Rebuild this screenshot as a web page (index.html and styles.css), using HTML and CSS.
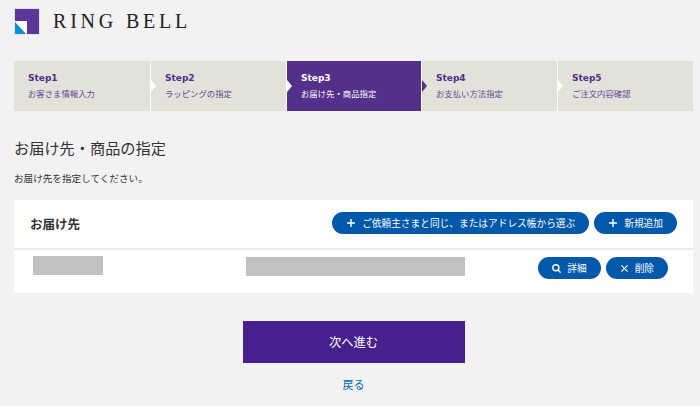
FILE: index.html

```html
<!DOCTYPE html>
<html lang="ja">
<head>
    <meta charset="UTF-8">
    <meta name="viewport" content="width=device-width, initial-scale=1.0">
    <title>お届け先・商品の指定</title>
    <link rel="stylesheet" href="styles.css">
</head>
<body>
    <header class="site-header">
        <svg class="logo-mark" width="26" height="27" viewBox="0 0 26 27">
            <rect x="0.5" y="0.5" width="25" height="26" fill="#5b3797" stroke="#e4dfee"/>
            <rect x="1" y="13" width="12" height="13" fill="#fff"/>
            <polygon points="1,14 12,26 1,26" fill="#0a8fd8"/>
        </svg>
        <span class="logo-text">RING BELL</span>
    </header>

    <ol class="steps">
        <li class="step">
            <strong>Step1</strong>
            <span>お客さま情報入力</span>
        </li>
        <li class="step">
            <strong>Step2</strong>
            <span>ラッピングの指定</span>
        </li>
        <li class="step current">
            <strong>Step3</strong>
            <span>お届け先・商品指定</span>
        </li>
        <li class="step after-current">
            <strong>Step4</strong>
            <span>お支払い方法指定</span>
        </li>
        <li class="step">
            <strong>Step5</strong>
            <span>ご注文内容確認</span>
        </li>
    </ol>

    <h1>お届け先・商品の指定</h1>
    <p class="lead">お届け先を指定してください。</p>

    <section class="card">
        <div class="card-head">
            <h2>お届け先</h2>
            <div class="actions">
                <a class="pill" href="#">
                    <svg class="icon" viewBox="0 0 10 10"><path d="M5 0v10M0 5h10"/></svg>
                    ご依頼主さまと同じ、またはアドレス帳から選ぶ
                </a>
                <a class="pill" href="#">
                    <svg class="icon" viewBox="0 0 10 10"><path d="M5 0v10M0 5h10"/></svg>
                    新規追加
                </a>
            </div>
        </div>
        <div class="card-row">
            <div class="mask mask-name"></div>
            <div class="mask mask-address"></div>
            <div class="actions">
                <a class="pill" href="#">
                    <svg class="icon search" viewBox="0 0 10 10"><circle cx="4.2" cy="4.2" r="3.4"/><path d="M6.6 6.6l3 3"/></svg>
                    詳細
                </a>
                <a class="pill" href="#">
                    <svg class="icon small" viewBox="0 0 10 10"><path d="M0.5 0.5l9 9M9.5 0.5l-9 9"/></svg>
                    削除
                </a>
            </div>
        </div>
    </section>

    <div class="next-wrap">
        <a class="next" href="#">次へ進む</a>
        <a class="back" href="#">戻る</a>
    </div>
</body>
</html>
```

FILE: styles.css

```css
* {
    box-sizing: border-box;
}
body {
    margin: 0;
    padding: 0 7px 0 14px;
    height: 406px;
    overflow: hidden;
    background-color: #f2f2f2;
    color: #333;
    font-family: "Liberation Sans", "Noto Sans CJK JP", sans-serif;
}
a {
    text-decoration: none;
}
.site-header {
    display: flex;
    align-items: center;
    gap: 13px;
    height: 61px;
    padding-bottom: 19px;
}
.logo-text {
    font-family: "Liberation Serif", serif;
    font-size: 20px;
    letter-spacing: 3.8px;
    color: #222;
}
.steps {
    display: grid;
    grid-template-columns: 136px 136px 135px 136px 136px;
    height: 50px;
    margin: 0;
    padding: 0;
    list-style: none;
}
.step {
    position: relative;
    display: flex;
    flex-direction: column;
    justify-content: center;
    gap: 3px;
    padding-left: 14px;
    background-color: #e2e2da;
    border-left: 1px solid #fff;
}
.step:first-child {
    border-left: none;
}
.step strong {
    font-family: "DejaVu Sans", sans-serif;
    font-size: 9px;
    line-height: 13px;
    color: #4f2d8c;
}
.step span {
    font-size: 8.4px;
    line-height: 13px;
    color: #63478f;
}
/* little arrow on the divider */
.step:not(:first-child)::before {
    content: "";
    position: absolute;
    left: 0;
    top: 19px;
    border-left: 5px solid #fff;
    border-top: 6px solid transparent;
    border-bottom: 6px solid transparent;
}
.step.current {
    background-color: #53308a;
}
.step.current strong,
.step.current span {
    color: #fff;
}
.step.after-current::before {
    border-left-color: #53308a;
}
h1 {
    margin: 28px 0 0;
    font-size: 15.2px;
    line-height: 20px;
    font-weight: normal;
    color: #333;
}
.lead {
    margin: 13px 0 0;
    font-size: 9.6px;
    line-height: 14px;
}
.card {
    margin-top: 14px;
    background-color: #fff;
}
.card-head {
    display: flex;
    justify-content: space-between;
    align-items: center;
    height: 50px;
    padding: 0 16px 2px;
    border-bottom: 2px solid #ebebe6;
}
h2 {
    margin: 0;
    font-size: 12.5px;
    color: #333;
}
.card-row {
    display: flex;
    height: 43px;
    padding: 6px 25px 0 19px;
}
.mask {
    height: 19px;
    background-color: #c1c1c1;
}
.mask-name {
    width: 70px;
}
.mask-address {
    width: 219px;
    margin: 1px 0 0 143px;
}
.actions {
    display: flex;
    gap: 5px;
}
.card-row .actions {
    margin: 1px 0 0 auto;
    height: 22px;
}
.pill {
    display: flex;
    align-items: center;
    justify-content: center;
    gap: 7px;
    height: 22px;
    padding: 0 14px 0 15px;
    border-radius: 11px;
    background-color: #0058aa;
    color: #fff;
    font-size: 9.7px;
    white-space: nowrap;
}
.icon {
    width: 8px;
    height: 8px;
    fill: none;
    stroke: #fff;
    stroke-width: 1.8;
}
.icon.search {
    width: 9px;
    height: 9px;
    margin-left: -1px;
    margin-right: -1px;
    stroke-width: 1.6;
}
.icon.small {
    width: 7px;
    height: 7px;
    stroke-width: 1.6;
}
.next-wrap {
    display: flex;
    flex-direction: column;
    align-items: center;
    margin-top: 28px;
}
.next {
    display: flex;
    align-items: center;
    justify-content: center;
    width: 222px;
    height: 42px;
    background-color: #46208c;
    color: #fff;
    font-size: 12.3px;
}
.back {
    margin-top: 13px;
    color: #0068b7;
    font-size: 11px;
}
```
